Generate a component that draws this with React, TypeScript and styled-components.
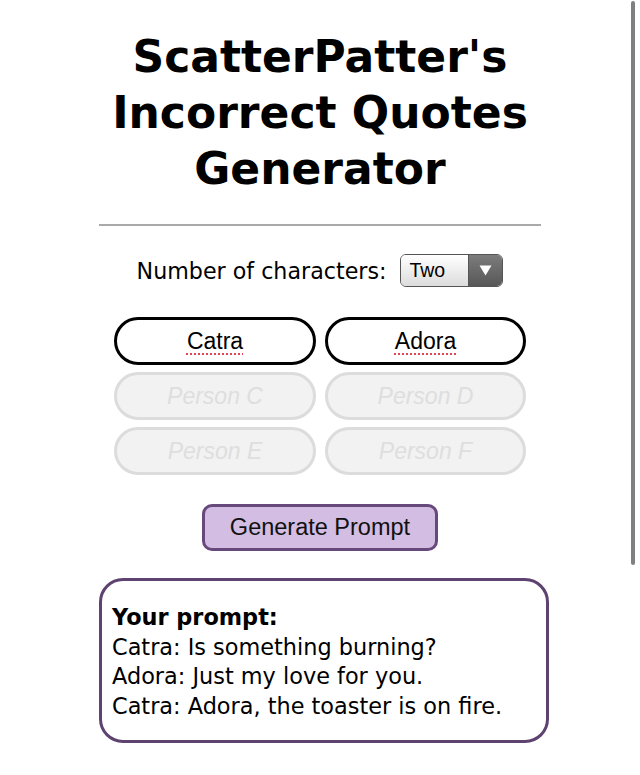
import React from "react";
import styled, { createGlobalStyle } from "styled-components";

const Global = createGlobalStyle`
  html, body { margin: 0; padding: 0; background: #ffffff; }
  body { font-family: "DejaVu Sans", Verdana, sans-serif; color: #000; }
  * { box-sizing: border-box; }
`;

const Page = styled.main`
  width: 442px;
  margin: 0 auto;
  padding-top: 29px;
  display: flex;
  flex-direction: column;
  align-items: center;
`;

const Title = styled.h1`
  margin: 0;
  font-family: "DejaVu Sans", Verdana, sans-serif;
  font-weight: bold;
  font-size: 44px;
  line-height: 56px;
  text-align: center;
  white-space: nowrap;
`;

const Rule = styled.hr`
  width: 100%;
  margin: 27px 0 0;
  border: none;
  height: 2px;
  background: #a9a9a9;
`;

const CountRow = styled.div`
  margin-top: 28px;
  display: flex;
  align-items: center;
  gap: 14px;
  font-size: 22.2px;
`;

const SelectBox = styled.div`
  width: 103px;
  height: 33px;
  display: flex;
  border: 1px solid #555;
  border-radius: 6px;
  overflow: hidden;
`;

const SelectValue = styled.span`
  flex: 1;
  display: flex;
  align-items: center;
  padding-left: 8px;
  font-family: "Liberation Sans", Arial, sans-serif;
  font-size: 19.5px;
  background: linear-gradient(#ffffff, #dcdcdc);
`;

const SelectArrow = styled.span`
  width: 34px;
  display: flex;
  align-items: center;
  justify-content: center;
  background: linear-gradient(#7c7c7c, #575757);
  border-left: 1px solid #555;
`;

const NameGrid = styled.div`
  margin-top: 30px;
  width: 412px;
  display: grid;
  grid-template-columns: 202px 201px;
  column-gap: 9px;
  row-gap: 7px;
`;

const NameInput = styled.input<{ $active?: boolean }>`
  height: 48px;
  width: 100%;
  border-radius: 24px;
  border: 3px solid ${(p) => (p.$active ? "#000" : "#dcdcdc")};
  background: ${(p) => (p.$active ? "#fff" : "#f2f2f2")};
  font-family: "Liberation Sans", Arial, sans-serif;
  font-size: 23px;
  text-align: center;
  color: #000;
  outline: none;
  padding: 0 10px;
  text-decoration: ${(p) => (p.$active ? "underline dotted #e0454f" : "none")};
  text-decoration-thickness: 2px;
  text-underline-offset: 5px;
  &::placeholder {
    color: #dedede;
    font-style: italic;
  }
  &:disabled { opacity: 1; }
`;

const GenerateButton = styled.button`
  margin-top: 29px;
  width: 236px;
  height: 47px;
  background: #d3bde2;
  border: 3px solid #674a7b;
  border-radius: 10px;
  font-family: "Liberation Sans", Arial, sans-serif;
  font-size: 23.5px;
  color: #111;
  padding: 0;
`;

const PromptBox = styled.section`
  margin-top: 27px;
  align-self: flex-start;
  width: 450px;
  border: 3px solid #5e4270;
  border-radius: 24px;
  padding: 22px 10px 19px;
  font-size: 22.4px;
  line-height: 29.5px;
`;

const PromptHead = styled.div`
  font-weight: bold;
`;

const ScrollThumb = styled.div`
  position: fixed;
  top: 1px;
  left: 631px;
  width: 4px;
  height: 564px;
  border-radius: 3px;
  background: #808080;
`;

const lines = [
  "Catra: Is something burning?",
  "Adora: Just my love for you.",
  "Catra: Adora, the toaster is on fire.",
];

export default function App() {
  return (
    <>
      <Global />
      <Page>
        <Title>
          ScatterPatter's
          <br />
          Incorrect Quotes
          <br />
          Generator
        </Title>
        <Rule />
        <CountRow>
          <span>Number of characters:</span>
          <SelectBox>
            <SelectValue>Two</SelectValue>
            <SelectArrow>
              <svg width="13" height="11" viewBox="0 0 13 11">
                <path d="M0.5 0.5 H12.5 L6.5 10.5 Z" fill="#fff" />
              </svg>
            </SelectArrow>
          </SelectBox>
        </CountRow>
        <NameGrid>
          <NameInput $active defaultValue="Catra" readOnly />
          <NameInput $active defaultValue="Adora" readOnly />
          <NameInput placeholder="Person C" disabled />
          <NameInput placeholder="Person D" disabled />
          <NameInput placeholder="Person E" disabled />
          <NameInput placeholder="Person F" disabled />
        </NameGrid>
        <GenerateButton>Generate Prompt</GenerateButton>
        <PromptBox>
          <PromptHead>Your prompt:</PromptHead>
          {lines.map((l) => (
            <div key={l}>{l}</div>
          ))}
        </PromptBox>
      </Page>
      <ScrollThumb />
    </>
  );
}
